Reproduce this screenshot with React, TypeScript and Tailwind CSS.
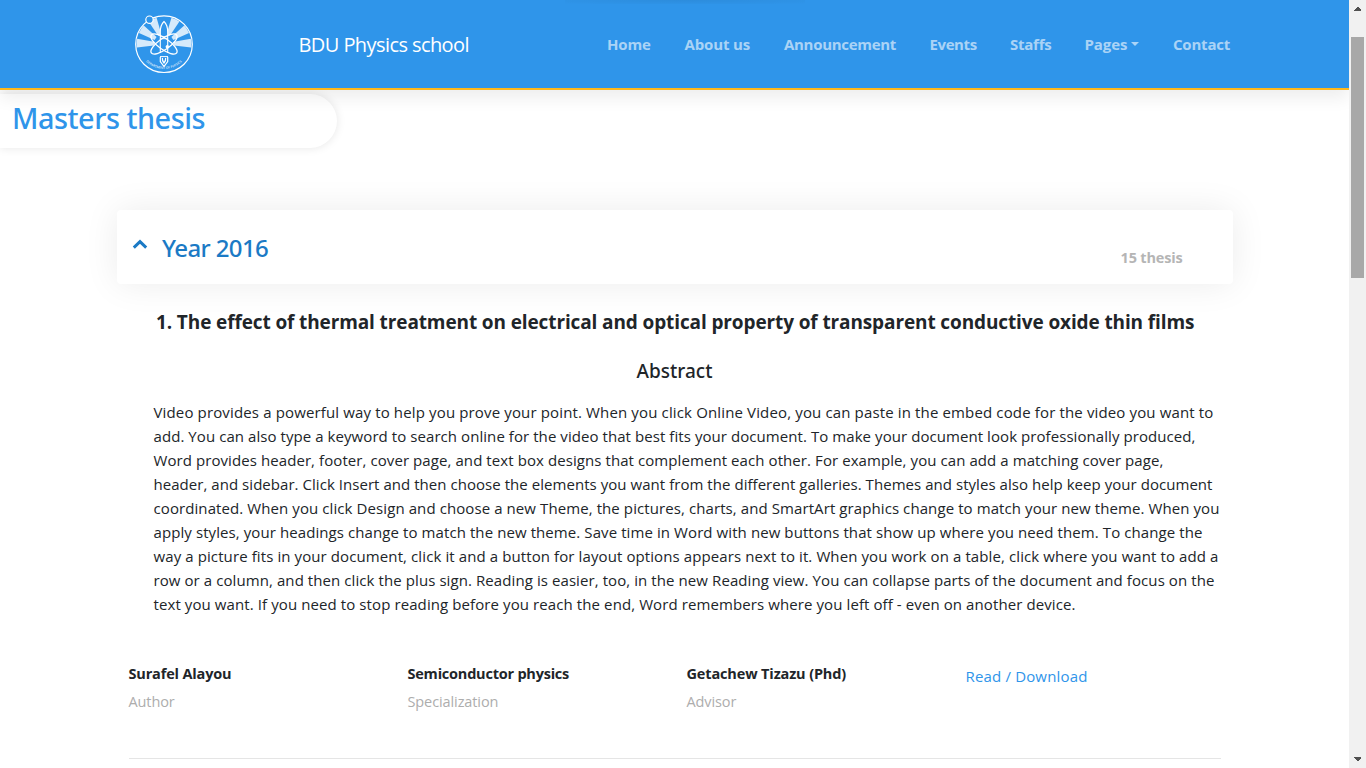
import { useId } from "react";

const NAV = [
  { label: "Home", cls: "w-[44px] tracking-[-0.15px]" },
  { label: "About us", cls: "w-[66px] tracking-[-0.15px]" },
  { label: "Announcement", cls: "w-[112px] tracking-[-0.3px]" },
  { label: "Events", cls: "w-[47px] tracking-[-0.4px]" },
  { label: "Staffs", cls: "w-[41px] tracking-[-0.25px]" },
  { label: "Pages", cls: "w-[55px] tracking-[-0.1px]", caret: true },
  { label: "Contact", cls: "w-[57px] tracking-[-0.2px]" },
];

const ABSTRACT = [
  { cls: "tracking-[0.142px]", text: "Video provides a powerful way to help you prove your point. When you click Online Video, you can paste in the embed code for the video you want to" },
  { cls: "tracking-[0.067px]", text: "add. You can also type a keyword to search online for the video that best fits your document. To make your document look professionally produced," },
  { cls: "tracking-[0.08px]", text: "Word provides header, footer, cover page, and text box designs that complement each other. For example, you can add a matching cover page," },
  { cls: "tracking-[0.045px]", text: "header, and sidebar. Click Insert and then choose the elements you want from the different galleries. Themes and styles also help keep your document" },
  { cls: "tracking-[0.089px]", text: "coordinated. When you click Design and choose a new Theme, the pictures, charts, and SmartArt graphics change to match your new theme. When you" },
  { cls: "tracking-[0.087px]", text: "apply styles, your headings change to match the new theme. Save time in Word with new buttons that show up where you need them. To change the" },
  { cls: "tracking-[0.101px]", text: "way a picture fits in your document, click it and a button for layout options appears next to it. When you work on a table, click where you want to add a" },
  { cls: "tracking-[0.083px]", text: "row or a column, and then click the plus sign. Reading is easier, too, in the new Reading view. You can collapse parts of the document and focus on the" },
  { cls: "tracking-[0.096px]", text: "text you want. If you need to stop reading before you reach the end, Word remembers where you left off - even on another device." },
];

const DETAILS = [
  { value: "Surafel Alayou", label: "Author", cls: "tracking-[-0.16px]" },
  { value: "Semiconductor physics", label: "Specialization", cls: "tracking-[-0.22px]" },
  { value: "Getachew Tizazu (Phd)", label: "Advisor", cls: "tracking-[-0.14px]" },
];

const RAYS = [-88, -57, -25, 25, 57, 88];

function Logo() {
  const arc = useId();
  return (
    <svg viewBox="0 0 60 60" className="size-[60px]" fill="none" stroke="white" aria-hidden="true">
      {RAYS.map((a) => (
        <path key={a} d="M28.2 20 L25.6 3 Q30 2.2 34.4 3 L31.8 20 Z" fill="white" fillOpacity="0.8" stroke="none" transform={`rotate(${a} 30 30)`} />
      ))}
      <circle cx="30" cy="30.2" r="28.3" strokeWidth="1.2" />
      <circle cx="15.5" cy="5.7" r="3.7" fill="#2f95ea" strokeWidth="1.2" />
      <path d="M26.3 39 V18 Q26.3 11 30 7.5 Q33.7 11 33.7 18 V39" fill="#2f95ea" strokeWidth="1.1" />
      <path d="M26 22.7 H34 M26 24.7 H34" strokeWidth="0.9" />
      <ellipse cx="30" cy="30" rx="15.5" ry="5.6" strokeWidth="1.3" transform="rotate(35 30 30)" />
      <ellipse cx="30" cy="30" rx="15.5" ry="5.6" strokeWidth="1.3" transform="rotate(-35 30 30)" />
      <circle cx="33.3" cy="32.7" r="1.7" fill="white" stroke="none" />
      <path d="M26 42.6 H34" strokeWidth="1" />
      <path d="M26.3 43 V47.5 L30 52.5 L33.7 47.5 V43 M28.4 44 Q28 47 30 49 Q32 47 31.6 44" strokeWidth="1.2" />
      <path id={arc} d="M8.35 42.5 A25 25 0 0 0 51.65 42.5" stroke="none" />
      <text fill="white" fillOpacity="0.85" stroke="none" textAnchor="middle" className="font-['Open_Sans',sans-serif] text-[3.2px] font-semibold">
        <textPath href={`#${arc}`} startOffset="50%">DEPARTMENT OF PHYSICS</textPath>
      </text>
    </svg>
  );
}

function Header() {
  return (
    <header className="relative z-10 flex h-[90px] shrink-0 items-start border-b-2 border-[#ffb81c] bg-[#2f95ea] shadow-[0_8px_16px_rgba(0,0,0,0.07)]">
      <div className="absolute left-[565px] top-0 h-[4px] w-[240px] bg-radial-[at_50%_0%] from-black/6 to-transparent" />
      <div className="ml-[134px] mt-[14px] size-[60px]">
        <Logo />
      </div>
      <div className="ml-[104.5px] w-[308.5px] pt-[31px] text-[20px] leading-[28px] tracking-[-0.58px] whitespace-nowrap text-white">BDU Physics school</div>
      <nav className="flex gap-[33.5px] pt-[32px] text-[15px] leading-[24px] font-bold whitespace-nowrap text-white/60">
        {NAV.map((n) => (
          <a key={n.label} className={`flex shrink-0 items-center ${n.cls}`}>
            {n.label}
            {n.caret && <span className="ml-[4px] border-x-[4px] border-t-[4px] border-x-transparent border-t-white/60" />}
          </a>
        ))}
      </nav>
    </header>
  );
}

function Scrollbar() {
  return (
    <div className="flex w-[17px] shrink-0 flex-col items-center bg-[#f1f1f1]">
      <svg viewBox="0 0 17 17" className="size-[17px]" fill="#505050" shapeRendering="crispEdges" aria-hidden="true">
        <path d="M5 11 V10 L8 7 H9 L12 10 V11 Z" />
      </svg>
      <div className="mt-[20px] h-[241px] w-[13px] bg-[#a8a8a8]" />
      <svg viewBox="0 0 17 17" className="mt-auto size-[17px]" fill="#505050" shapeRendering="crispEdges" aria-hidden="true">
        <path d="M5 6 V7 L8 10 H9 L12 7 V6 Z" />
      </svg>
    </div>
  );
}

export default function App() {
  return (
    <div className="flex h-[768px] w-[1366px] overflow-hidden bg-white font-['Open_Sans','Noto_Sans',sans-serif] text-[#212529]">
      <div className="flex min-w-0 flex-1 flex-col overflow-hidden">
        <Header />
        <h1 className="mt-[4px] h-[54px] w-[337px] shrink-0 rounded-r-full bg-white pl-[12px] pt-[6px] font-['Noto_Sans',sans-serif] text-[28.8px] leading-[36px] font-medium tracking-[-0.46px] text-[#2f95ea] shadow-[0_0_10px_rgba(0,0,0,0.1)]">
          Masters thesis
        </h1>

        <section className="mt-[62px] ml-[117px] flex h-[74px] w-[1116px] shrink-0 rounded-[4px] bg-white text-[#1b7ac5] shadow-[0_0_35px_rgba(0,0,0,0.08)]">
          <svg viewBox="0 0 16 10" className="ml-[14.5px] mt-[29px] h-[10px] w-[16px]" fill="none" stroke="currentColor" strokeWidth="3" aria-hidden="true">
            <path d="M1.8 8.6 L8 2.6 L14.2 8.6" />
          </svg>
          <h2 className="ml-[14.5px] pt-[22px] font-['Noto_Sans',sans-serif] text-[24px] leading-[32px] font-medium tracking-[-0.6px]">Year 2016</h2>
          <span className="mr-[50.5px] ml-auto pt-[36px] text-[14.5px] leading-[24px] font-bold tracking-[-0.18px] text-[#b5b5b5]">15 thesis</span>
        </section>

        <article className="flex flex-1 flex-col whitespace-nowrap">
          <h3 className="mt-[24px] ml-[156px] text-[19px] leading-[28px] font-bold tracking-[-0.115px]">
            1. The effect of thermal treatment on electrical and optical property of transparent conductive oxide thin films
          </h3>
          <h4 className="mt-[21px] text-center font-['Noto_Sans',sans-serif] text-[19px] leading-[28px] font-medium">Abstract</h4>
          <p className="mt-[15px] ml-[153.5px] text-[15px] leading-[24px]">
            {ABSTRACT.map((l) => (
              <span key={l.text} className={`block ${l.cls}`}>{l.text}</span>
            ))}
          </p>
          <div className="mt-[47px] ml-[128.5px] grid grid-cols-[279px_279px_279px_256px] text-[14.5px] leading-[22px]">
            {DETAILS.map((d) => (
              <div key={d.label}>
                <div className={`font-bold ${d.cls}`}>{d.value}</div>
                <div className="mt-[6px] tracking-[-0.1px] text-[#adadad]">{d.label}</div>
              </div>
            ))}
            <a className="pt-px text-[15px] leading-[24px] tracking-[0.164px] text-[#2f95ea]">Read / Download</a>
          </div>
          <hr className="mt-[45px] ml-[129px] w-[1092px] border-[#e5e5e5]" />
        </article>
      </div>
      <Scrollbar />
    </div>
  );
}
